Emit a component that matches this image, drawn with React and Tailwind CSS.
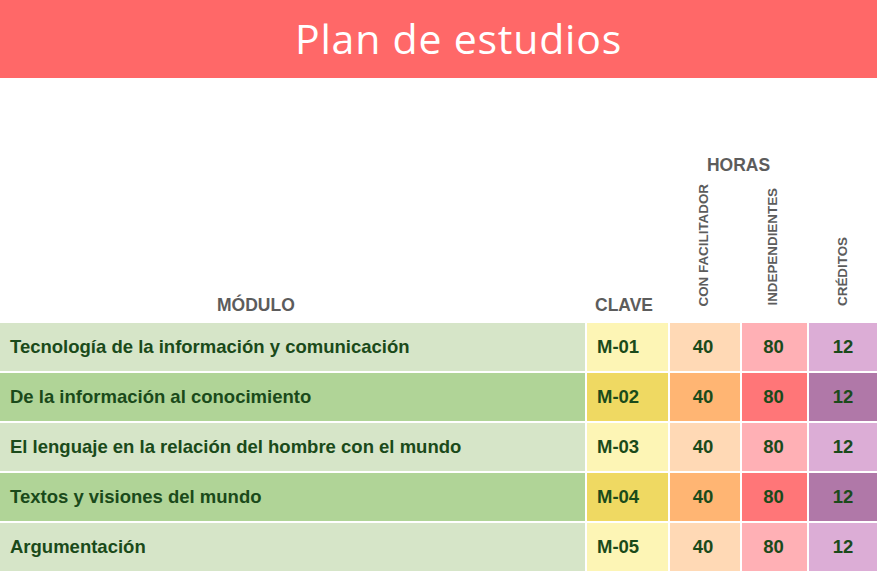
import React from "react";

const rows = [
  { name: "Tecnología de la información y comunicación", key: "M-01", dark: false },
  { name: "De la información al conocimiento", key: "M-02", dark: true },
  { name: "El lenguaje en la relación del hombre con el mundo", key: "M-03", dark: false },
  { name: "Textos y visiones del mundo", key: "M-04", dark: true },
  { name: "Argumentación", key: "M-05", dark: false },
];

const vlabel = "[writing-mode:vertical-rl] rotate-180 text-[13.4px] font-bold leading-[14px] text-[#5c5c5c]";

export default function App() {
  return (
    <div className="w-[877px] h-[571px] bg-white overflow-hidden font-['Liberation_Sans',Arial,sans-serif]">
      <div className="h-[78px] bg-[#ff6868] flex items-center justify-center pl-[40px]">
        <h1 className="font-['Open_Sans',sans-serif] text-[41px] font-normal tracking-[0.8px] text-white leading-none pb-[1px]">
          Plan de estudios
        </h1>
      </div>

      <div className="grid grid-cols-[585px_81px_70px_65px_68px] grid-rows-[auto_1fr] gap-x-[2px] h-[243px]">
        <div className="row-span-2 self-end pl-[217px] pb-[6px] text-[17.5px] leading-[20px] font-bold text-[#5c5c5c]">
          MÓDULO
        </div>
        <div className="row-span-2 self-end pl-[8px] pb-[6px] text-[17.5px] leading-[20px] font-bold text-[#5c5c5c]">
          CLAVE
        </div>
        <div className="col-span-2 mt-[77px] h-[20px] text-center text-[17.5px] leading-[20px] font-bold text-[#5c5c5c]">
          HORAS
        </div>
        <div className="row-span-2 self-end flex justify-center pb-[15px]">
          <span className={vlabel}>CRÉDITOS</span>
        </div>
        <div className="self-end flex justify-center pb-[15px] pr-[3px]">
          <span className={vlabel}>CON FACILITADOR</span>
        </div>
        <div className="self-end flex justify-center pb-[15px] pr-[4px]">
          <span className={vlabel}>INDEPENDIENTES</span>
        </div>
      </div>

      <div className="mt-[2px] flex flex-col gap-[2px]">
        {rows.map((r) => (
          <div
            key={r.key}
            className="grid grid-cols-[585px_81px_70px_65px_68px] gap-x-[2px] h-[48px] text-[18.5px] font-bold text-[#1a4a1a]"
          >
            <div className={`flex items-center pl-[10px] ${r.dark ? "bg-[#b0d497]" : "bg-[#d6e5c8]"}`}>{r.name}</div>
            <div className={`flex items-center pl-[10px] ${r.dark ? "bg-[#efd962]" : "bg-[#fdf5b5]"}`}>{r.key}</div>
            <div className={`flex items-center justify-center pr-[4px] ${r.dark ? "bg-[#ffb573]" : "bg-[#ffd9b5]"}`}>40</div>
            <div className={`flex items-center justify-center pr-[2px] ${r.dark ? "bg-[#ff7678]" : "bg-[#ffb0b5]"}`}>80</div>
            <div className={`flex items-center justify-center ${r.dark ? "bg-[#b078a8]" : "bg-[#dcadd6]"}`}>12</div>
          </div>
        ))}
      </div>
    </div>
  );
}
